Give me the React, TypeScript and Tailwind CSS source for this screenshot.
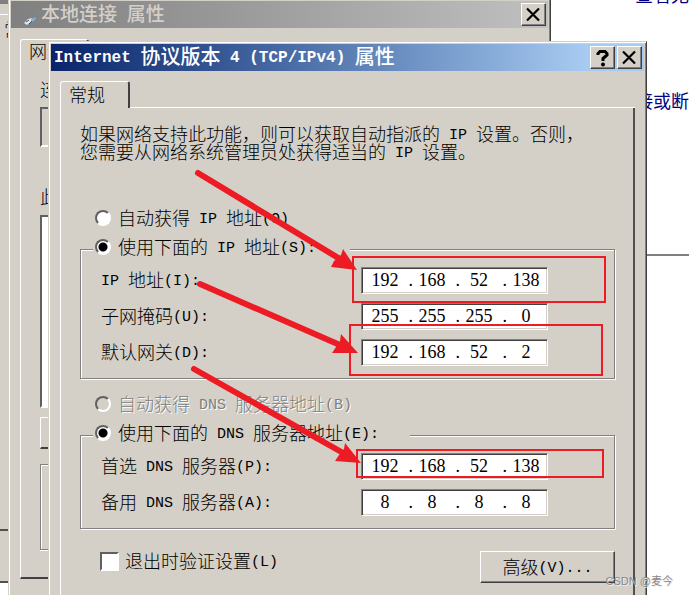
import type { ReactNode } from "react";

const RED = "#ed1c24";

// Latin runs are set smaller in a monospace face so two of them take one hanzi.
function Mixed({ text, latin = "text-[15px]" }: { text: string; latin?: string }) {
  return (
    <>
      {text.split(/([\x20-\x7e]+)/).map((run, i) =>
        i % 2 ? (
          <span
            key={i}
            className={`align-[2px] font-['Liberation_Mono',monospace] leading-0 whitespace-pre ${latin}`}
          >
            {run}
          </span>
        ) : (
          run
        ),
      )}
    </>
  );
}

function CaptionButton({ label, children }: { label: string; children: ReactNode }) {
  return (
    <button
      type="button"
      aria-label={label}
      className="flex h-[23px] w-[25px] items-center justify-center border border-t-white border-l-white border-r-[#404040] border-b-[#404040] bg-[#d4d0c8] shadow-[inset_-1px_-1px_0_#808080]"
    >
      {children}
    </button>
  );
}

function CloseGlyph() {
  return (
    <svg width="15" height="15" viewBox="0 0 15 15" fill="none" stroke="#000" strokeWidth="2.2">
      <path d="M1 1.5 13 13.5M13 1.5 1 13.5" />
    </svg>
  );
}

function HelpGlyph() {
  return (
    <svg width="15" height="18" viewBox="0 0 15 18" fill="none" stroke="#000" strokeWidth="3">
      <path d="M3 6V4.5L5 2.5H10L12 4.5V6L8 9.5V12" />
      <circle cx="8" cy="15.5" r="2" fill="#000" stroke="none" />
    </svg>
  );
}

function Radio({
  name,
  text,
  checked,
  disabled,
}: {
  name: string;
  text: string;
  checked?: boolean;
  disabled?: boolean;
}) {
  return (
    <label
      className={`flex h-5 items-center gap-[7px] leading-5 whitespace-nowrap ${
        disabled ? "text-[#808080] [text-shadow:1px_1px_0_#fff]" : ""
      }`}
    >
      <input
        type="radio"
        name={name}
        defaultChecked={checked}
        disabled={disabled}
        className="size-4 shrink-0 appearance-none rounded-full border-2 border-t-[#606060] border-l-[#606060] border-r-white border-b-white bg-white checked:bg-[radial-gradient(circle,#000_4px,#fff_5px)] disabled:bg-[#d4d0c8]"
      />
      <span className="pb-[2px]">
        <Mixed text={text} />
      </span>
    </label>
  );
}

function AddressRow({ label, octets }: { label: string; octets: string[] }) {
  return (
    <div role="group" aria-label={label} className="flex h-[27px] items-center">
      <span className="w-[260px] shrink-0 pb-1 leading-5 whitespace-nowrap">
        <Mixed text={label} />
      </span>
      <div className="flex h-[27px] w-[187px] items-center border border-t-[#808080] border-l-[#808080] border-r-white border-b-white bg-white pb-px pl-1 font-['Liberation_Serif',serif] shadow-[inset_1px_1px_0_#404040,inset_-1px_-1px_0_#d4d0c8]">
        {octets.map((octet, i) => (
          <div key={i} className="flex items-center">
            {i > 0 && <span className="w-[9px] text-right leading-5">.</span>}
            <input
              type="text"
              aria-label={`${label} ${i + 1}`}
              defaultValue={octet}
              className="h-5 w-[38px] bg-transparent text-center leading-5 outline-none"
            />
          </div>
        ))}
      </div>
    </div>
  );
}

function Group({ legend, width, children }: { legend: ReactNode; width: string; children: ReactNode }) {
  return (
    <fieldset className="mt-[9px] border border-[#808080] px-3 pb-3 shadow-[inset_1px_1px_0_#fff,1px_1px_0_#fff]">
      <legend className={`h-6 bg-[#d4d0c8] pl-[2px] ${width}`}>{legend}</legend>
      <div className="flex flex-col gap-[9px] pt-[6px] pl-2">{children}</div>
    </fieldset>
  );
}

function ConnectionWindow() {
  return (
    <div className="absolute -top-[2px] -bottom-4 left-2 right-[138px] border border-[#d4d0c8] border-r-[#404040] bg-[#d4d0c8] shadow-[inset_1px_1px_0_#fff,inset_-1px_0_0_#808080]">
      <div className="mx-[2px] mt-[2px] flex h-[27px] items-center bg-linear-to-r from-[#808080] to-[#c0c0c0] pr-[2px] pl-[13px] text-[19px] text-[#d4d0c8]">
        <svg width="13" height="9" viewBox="0 0 13 9" className="mt-3 mr-1 shrink-0">
          <path d="M0 7 4 3 8 2 7 6 3 9Z" fill="#dfe7ee" />
          <path d="M2 6 5 4M5 8 9 4" stroke="#35536b" />
          <path d="M7 3 12 1 11 4 8 6Z" fill="#7fb2d8" />
        </svg>
        <h2 className="mr-auto pb-1 leading-6 font-medium whitespace-pre">
          <Mixed text="本地连接 属性" latin="text-[16px]" />
        </h2>
        <CaptionButton label="关闭">
          <CloseGlyph />
        </CaptionButton>
      </div>
      <div className="pt-[11px] pl-[11px]">
        <div className="h-7 w-[69px] rounded-t-[3px] border-t border-l border-r-2 border-white border-r-[#404040] pl-2 leading-5 whitespace-nowrap">
          网络
        </div>
        <div className="h-[512px] border-b-2 border-l border-l-white border-b-[#404040] pl-[19px]">
          <p className="pt-3 leading-5">连接时使用:</p>
          <div className="mt-2 h-10 border-2 border-[#606060] border-b-white" />
          <p className="mt-[39px] leading-5">此连接使用下列项目(O):</p>
          <div className="mt-[9px] h-[193px] border-2 border-[#606060] border-b-white bg-white" />
          <div className="mt-[9px] h-8 border border-white border-b-2 border-b-[#404040]" />
          <div className="mt-[15px] h-[86px] border border-[#808080] shadow-[inset_1px_1px_0_#fff,0_1px_0_#fff]" />
        </div>
      </div>
    </div>
  );
}

function Desktop() {
  return (
    <div aria-hidden="true">
      <div className="absolute inset-y-0 left-0 flex w-2 flex-col overflow-hidden bg-[#d4d0c8]">
        <div className="h-1 shrink-0 bg-[#808080]" />
        <div className="mt-[10px] h-px shrink-0 bg-white" />
        <p className="mt-1 pl-1 leading-5">常</p>
        <div className="mt-auto mb-[50px] h-[2px] shrink-0 bg-[#505050]" />
        <div className="h-[2px] shrink-0 bg-[#505050]" />
        <div className="h-3 shrink-0 bg-white" />
      </div>
      <div className="absolute inset-y-0 right-0 w-[138px] text-right font-normal whitespace-nowrap text-[#000080]">
        <p className="-mt-4 leading-5">查看无</p>
        <p className="mt-[86px] leading-5">接或断</p>
        <div className="mt-36 h-[2px] bg-[#808080]" />
      </div>
    </div>
  );
}

function Annotations() {
  return (
    <svg aria-hidden="true" className="pointer-events-none absolute inset-0 size-full">
      <g fill="none" stroke={RED} strokeWidth="2">
        <rect x="353" y="257" width="252" height="45" />
        <rect x="350" y="325" width="252" height="50" />
        <rect x="357" y="450" width="246" height="27" />
      </g>
      <g stroke={RED} strokeWidth="6" strokeLinecap="round">
        <path d="M198 173 340 259" />
        <path d="M200 284 340 345" />
        <path d="M194 369 345 454" />
      </g>
      <g fill={RED}>
        <path d="M357 270 343 249 341 255 334 261 331 267Z" />
        <path d="M358 353 341 334 340 341 336 347 332 353Z" />
        <path d="M361 463 345 443 344 449 339 455 335 461Z" />
      </g>
    </svg>
  );
}

export default function App() {
  return (
    <main className="relative h-screen overflow-hidden bg-white font-['Noto_Sans_CJK_SC',sans-serif] text-[18px] font-light text-black">
      <Desktop />
      <ConnectionWindow />

      <section className="relative mt-[41px] mr-[42px] ml-12 border border-[#d4d0c8] border-r-[#404040] bg-[#d4d0c8] px-[2px] pt-[2px] pb-12 shadow-[inset_1px_1px_0_#fff,inset_-1px_0_0_#808080]">
        <div className="flex h-[27px] items-center gap-[2px] bg-linear-to-r from-[#0a246a] to-[#a6caf0] to-90% pr-[2px] pl-[3px] text-[20px] text-white">
          <h1 className="mr-auto pb-1 leading-6 font-medium whitespace-nowrap">
            <Mixed text="Internet 协议版本 4 (TCP/IPv4) 属性" latin="text-[16px] font-bold" />
          </h1>
          <CaptionButton label="帮助">
            <HelpGlyph />
          </CaptionButton>
          <CaptionButton label="关闭">
            <CloseGlyph />
          </CaptionButton>
        </div>

        <form className="px-[9px] pt-[10px]">
          <div className="flex h-[27px]">
            <button
              type="button"
              className="flex w-[70px] rounded-t-[3px] border-t border-r-2 border-l border-white border-r-[#404040] pl-2 leading-6"
            >
              常规
            </button>
            <div className="flex-1 border-b border-white" />
          </div>
          <div className="border-r-2 border-l border-l-white border-r-[#505050] pr-[18px] pb-10 pl-[19px]">
            <p className="pt-4 leading-[18px]">
              <Mixed text="如果网络支持此功能，则可以获取自动指派的 IP 设置。否则，" />
              <br />
              <Mixed text="您需要从网络系统管理员处获得适当的 IP 设置。" />
            </p>

            <div className="mt-12 pl-[15px]">
              <Radio name="ip" text="自动获得 IP 地址(O)" />
            </div>
            <Group width="w-[257px]" legend={<Radio name="ip" text="使用下面的 IP 地址(S):" checked />}>
              <AddressRow label="IP 地址(I):" octets={["192", "168", "52", "138"]} />
              <AddressRow label="子网掩码(U):" octets={["255", "255", "255", "0"]} />
              <AddressRow label="默认网关(D):" octets={["192", "168", "52", "2"]} />
            </Group>

            <div className="mt-[15px] pl-[15px]">
              <Radio name="dns" text="自动获得 DNS 服务器地址(B)" disabled />
            </div>
            <Group width="w-[317px]" legend={<Radio name="dns" text="使用下面的 DNS 服务器地址(E):" checked />}>
              <AddressRow label="首选 DNS 服务器(P):" octets={["192", "168", "52", "138"]} />
              <AddressRow label="备用 DNS 服务器(A):" octets={["8", "8", "8", "8"]} />
            </Group>

            <div className="mt-[22px] flex items-start justify-between pl-5">
              <label className="flex h-5 items-center gap-[6px] leading-5">
                <input
                  type="checkbox"
                  className="size-[19px] appearance-none border-2 border-t-[#606060] border-l-[#606060] border-r-white border-b-white bg-white"
                />
                <span className="pb-[2px]">
                  <Mixed text="退出时验证设置(L)" />
                </span>
              </label>
              <button
                type="button"
                className="h-8 w-[135px] border border-t-white border-l-white border-r-[#404040] border-b-[#404040] pb-[2px] leading-5 shadow-[inset_-1px_-1px_0_#808080]"
              >
                <Mixed text="高级(V)..." />
              </button>
            </div>
          </div>
        </form>
      </section>

      <Annotations />
      <p className="absolute right-4 bottom-[6px] font-['Liberation_Sans','Noto_Sans_CJK_SC',sans-serif] text-[11px] leading-4 font-normal text-[#888] [text-shadow:1px_1px_0_#eee]">
        CSDN @麦今
      </p>
    </main>
  );
}
